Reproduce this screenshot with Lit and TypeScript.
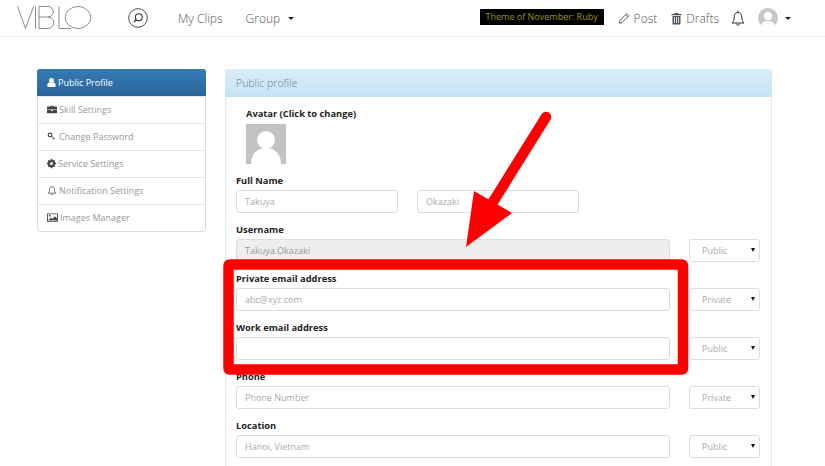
import { LitElement, html, css, svg } from "lit";
import { customElement } from "lit/decorators.js";

const icons: Record<string, { w: number; vb: string; g: unknown }> = {
  user: { w: 9, vb: "1.200 1 10.600 11", g: svg`<path d="M6.500 1.200a2.900 2.900 0 0 1 2.900 3.100 2.900 2.900 0 0 1-5.800 0 2.900 2.900 0 0 1 2.900-3.100zM4.200 6.600c1.300 1 3.300 1 4.600 0 1.600.2 2.700 1.300 2.700 3.600 0 1-.6 1.600-1.500 1.600H3c-.9 0-1.500-.6-1.500-1.600 0-2.300 1.100-3.400 2.700-3.600z" fill="currentColor"/>` },
  case: { w: 10, vb: "0.500 1 12 11", g: svg`<path fill-rule="evenodd" d="M4.500 3V2h4v1h4v3.500H.5V3zM5.400 3h2.200v-.3H5.400zM.5 7.200h5v1h2v-1h5v3.800H.5z" fill="currentColor"/>` },
  key: { w: 10, vb: "0 0 13 13", g: svg`<circle cx="4" cy="4.500" r="2.400" fill="none" stroke="currentColor" stroke-width="1.500"/><path d="M5.800 6l4.200 3.600M8.200 8l-1 1.300M10 9.500l-1 1.200" fill="none" stroke="currentColor" stroke-width="1.200"/>` },
  gear: { w: 9, vb: "0.500 1 12 12", g: svg`<path fill-rule="evenodd" d="M5.500 1h2l.3 1.500 1 .4 1.300-.8 1.400 1.400-.8 1.300.4 1 1.500.3v2l-1.500.3-.4 1 .8 1.300-1.400 1.400-1.300-.8-1 .4-.3 1.500h-2l-.3-1.500-1-.4-1.300.8L1.500 10.700l.8-1.300-.4-1L.4 8.100v-2l1.500-.3.400-1-.8-1.300L2.900 2.100l1.300.8 1-.4zM6.500 5a2 2 0 1 0 0 4 2 2 0 0 0 0-4z" fill="currentColor"/>` },
  bell: { w: 10, vb: "0 0 13 13", g: svg`<path d="M6.500 1.500c-2 0-3.200 1.500-3.200 3.500 0 2.500-.5 3.700-1.800 5h10c-1.300-1.300-1.800-2.500-1.800-5 0-2-1.200-3.500-3.200-3.500zM5.300 11.200c.3 1 2.100 1 2.400 0" fill="none" stroke="currentColor" stroke-width="1"/>` },
  image: { w: 11, vb: "0.500 1.500 12 11", g: svg`<path fill-rule="evenodd" d="M.5 2.500h12v9H.5zM1.500 3.500v7h10v-7z" fill="currentColor"/><path d="M2 10l2.800-3 1.700 1.500 2.500-3 2.500 2.500V10z" fill="currentColor"/><circle cx="3.500" cy="5" r="1" fill="currentColor"/>` },
};

@customElement("app-root")
export class AppRoot extends LitElement {
  static styles = css`
    :host { display: block; width: 825px; height: 466px; position: relative; overflow: hidden; background: #fff; font-family: "Open Sans", sans-serif; color: #333; }
    header { height: 36px; border-bottom: 1px solid #f0f0f0; display: flex; align-items: center; font-size: 12px; font-weight: 300; color: #555; }
    .logo { margin-left: 17px; width: 75px; height: 24px; display: block; }
    .search { margin-left: 36px; width: 20px; height: 20px; display: block; }
    .clips { margin-left: 30px; }
    .group { margin-left: 23px; display: flex; align-items: center; gap: 8px; }
    .caret { width: 0; height: 0; border: 3px solid transparent; border-top-color: #222; border-bottom: 0; display: block; }
    .theme { margin: 0 0 2px auto; background: #000; color: #9c9a00; font-size: 9px; font-weight: 400; white-space: nowrap; height: 16px; line-height: 16px; width: 124px; text-align: center; }
    .action { display: flex; align-items: center; gap: 4px; }
    .post { margin-left: 14px; }
    .drafts { margin-left: 14px; }
    .action svg { display: block; }
    .bell { margin-left: 12px; display: block; }
    .me { margin-left: 13px; margin-right: 34px; display: flex; align-items: center; gap: 7px; }
    .me svg { display: block; }
    main { display: flex; align-items: flex-start; padding: 32px 53px 0 37px; gap: 19px; }
    nav { width: 169px; flex: none; border-radius: 3px; border: 1px solid #ddd; box-sizing: border-box; font-size: 9px; color: #999; }
    .item { height: 27px; display: flex; align-items: center; gap: 2px; padding: 0 0 1px 9px; border-top: 1px solid #e6e6e6; box-sizing: border-box; }
    .item svg { display: block; height: 11px; color: #444; }
    .item:first-child { margin: -1px -1px 0; border: 0; border-radius: 3px 3px 0 0; background: linear-gradient(#337ab7, #2b669a); color: #fff; padding: 0 0 0 10px; }
    .item:first-child svg { color: #fff; }
    .panel { flex: 1; height: 420px; border: 1px solid #d9edf7; border-bottom: 0; border-radius: 3px 3px 0 0; box-sizing: border-box; }
    .title { height: 28px; margin: -1px -1px 0; background: linear-gradient(#d9edf7, #c4e3f3); border-radius: 3px 3px 0 0; padding-left: 11px; display: flex; align-items: center; font-size: 10.500px; font-weight: 300; color: #6f828e; }
    .body { padding: 0 10px; display: flex; flex-direction: column; }
    label { font-size: 9.300px; font-weight: 700; color: #222; display: block; line-height: 14px; }
    .avatar { margin: 10px 0 0 10px; }
    .avatar .pic { margin-top: 3px; width: 40px; height: 40px; display: block; }
    .row { margin-top: 9px; }
    .row label { padding-top: 1px; }
    .fields { display: flex; gap: 19px; margin-top: 2px; }
    .input { height: 23px; box-sizing: border-box; border: 1px solid #ddd; border-radius: 3px; padding-left: 8px; display: flex; align-items: center; font-size: 9px; color: #aaa; background: #fff; }
    .half { width: 162px; }
    .wide { width: 434px; }
    .ro { background: #eee; color: #999; }
    .select { width: 71px; position: relative; padding-left: 12px; }
    .select i { position: absolute; right: 4px; top: 8px; width: 0; height: 0; border: 2.500px solid transparent; border-top: 4px solid #111; border-bottom: 0; }
    .overlay { position: absolute; inset: 0; pointer-events: none; }
  `;

  private nav = [
    ["user", "Public Profile"],
    ["case", "Skill Settings"],
    ["key", "Change Password"],
    ["gear", "Service Settings"],
    ["bell", "Notification Settings"],
    ["image", "Images Manager"],
  ];

  private rows = [
    ["Username", "Takuya.Okazaki", "Public", true],
    ["Private email address", "abc@xyz.com", "Private", false],
    ["Work email address", "", "Public", false],
    ["Phone", "Phone Number", "Private", false],
    ["Location", "Hanoi, Vietnam", "Public", false],
  ] as const;

  render() {
    return html`
      <header>
        <svg class="logo" viewBox="0 0 75 24" fill="none" stroke="#666" stroke-width=".75" role="img" aria-label="VIBLO">
          <path d="M.5 .5 8.500 22.500 16.500 .5M18.500 .5V22.500M22 .5V22.500M22 .5h9a5 5 0 0 1 0 10.500H22M31 11a5.500 5.500 0 0 1 0 11.500H22M42 .5V22.500H54"/>
          <ellipse cx="61" cy="11.500" rx="12.800" ry="11"/>
        </svg>
        <svg class="search" viewBox="0 0 20 20" fill="none" stroke="#333">
          <circle cx="10" cy="10" r="9.300" stroke-width=".9"/>
          <circle cx="10.800" cy="9.200" r="3.400" stroke-width="1.100"/>
          <path d="M8.300 11.700 6 14" stroke-width="1.400"/>
        </svg>
        <span class="clips">My Clips</span>
        <span class="group">Group <i class="caret"></i></span>
        <span class="theme">Theme of November: Ruby</span>
        <span class="action post">
          <svg width="12" height="13" viewBox="0 0 13 13" fill="none" stroke="#555"><path d="M1.500 11.500 2.200 8.500 9.500 1.200 11.800 3.500 4.500 10.800zM8.300 2.400 10.600 4.700"/></svg>
          Post
        </span>
        <span class="action drafts">
          <svg width="11" height="13" viewBox="0 0 11 13" fill="#555"><path d="M3.800 1h3.400l.5 1H10.500v1.200H.5V2h2.800zM1.500 4h8v7.500c0 .6-.4 1-1 1h-6c-.6 0-1-.4-1-1zM3.200 5v6h.8V5zM5.100 5v6h.8V5zM7 5v6h.8V5z" fill-rule="evenodd"/></svg>
          Drafts
        </span>
        <svg class="bell" width="14" height="17" viewBox="0 0 14 17" fill="none" stroke="#333"><path d="M7 .5v2M7 2.500c-2.800 0-3.800 2-3.800 4.500 0 3-.7 4.500-2.200 6h12c-1.500-1.500-2.200-3-2.200-6 0-2.500-1-4.500-3.800-4.500zM5.300 13.500c.2 2.300 3.200 2.300 3.400 0"/></svg>
        <span class="me">
          <svg width="20" height="20" viewBox="0 0 20 20"><circle cx="10" cy="10" r="10" fill="#c8c8c8"/><circle cx="10" cy="8" r="4.200" fill="#fff"/><path d="M3 18c1-4 4-5 7-5s6 1 7 5a10 10 0 0 1-14 0z" fill="#fff"/></svg>
          <i class="caret"></i>
        </span>
      </header>
      <main>
        <nav>
          ${this.nav.map(([icon, text]) => {
            const i = icons[icon];
            return html`<div class="item"><svg width=${i.w} viewBox=${i.vb}>${i.g}</svg>${text}</div>`;
          })}
        </nav>
        <section class="panel">
          <div class="title">Public profile</div>
          <div class="body">
            <div class="avatar">
              <label>Avatar (Click to change)</label>
              <svg class="pic" viewBox="0 0 40 40"><rect width="40" height="40" fill="#c2c2c2"/><circle cx="20" cy="16" r="9" fill="#fff"/><path d="M5 40c0-10 6-16 15-16s15 6 15 16z" fill="#fff"/></svg>
            </div>
            <div class="row">
              <label>Full Name</label>
              <div class="fields">
                <div class="input half">Takuya</div>
                <div class="input half">Okazaki</div>
              </div>
            </div>
            ${this.rows.map(
              ([name, value, vis, ro]) => html`<div class="row">
                <label>${name}</label>
                <div class="fields">
                  <div class="input wide ${ro ? "ro" : ""}">${value}</div>
                  <div class="input select">${vis}<i></i></div>
                </div>
              </div>`
            )}
          </div>
        </section>
      </main>
      <svg class="overlay" viewBox="0 0 825 466">
        <rect x="228.500" y="264.500" width="454.500" height="105" rx="1" fill="none" stroke="#f00" stroke-width="10.500"/>
        <path d="M546 117 493 202" stroke="#f00" stroke-width="10.500" stroke-linecap="round"/>
        <path d="M474 191 512 213 466 247z" fill="#f00"/>
      </svg>
    `;
  }
}
